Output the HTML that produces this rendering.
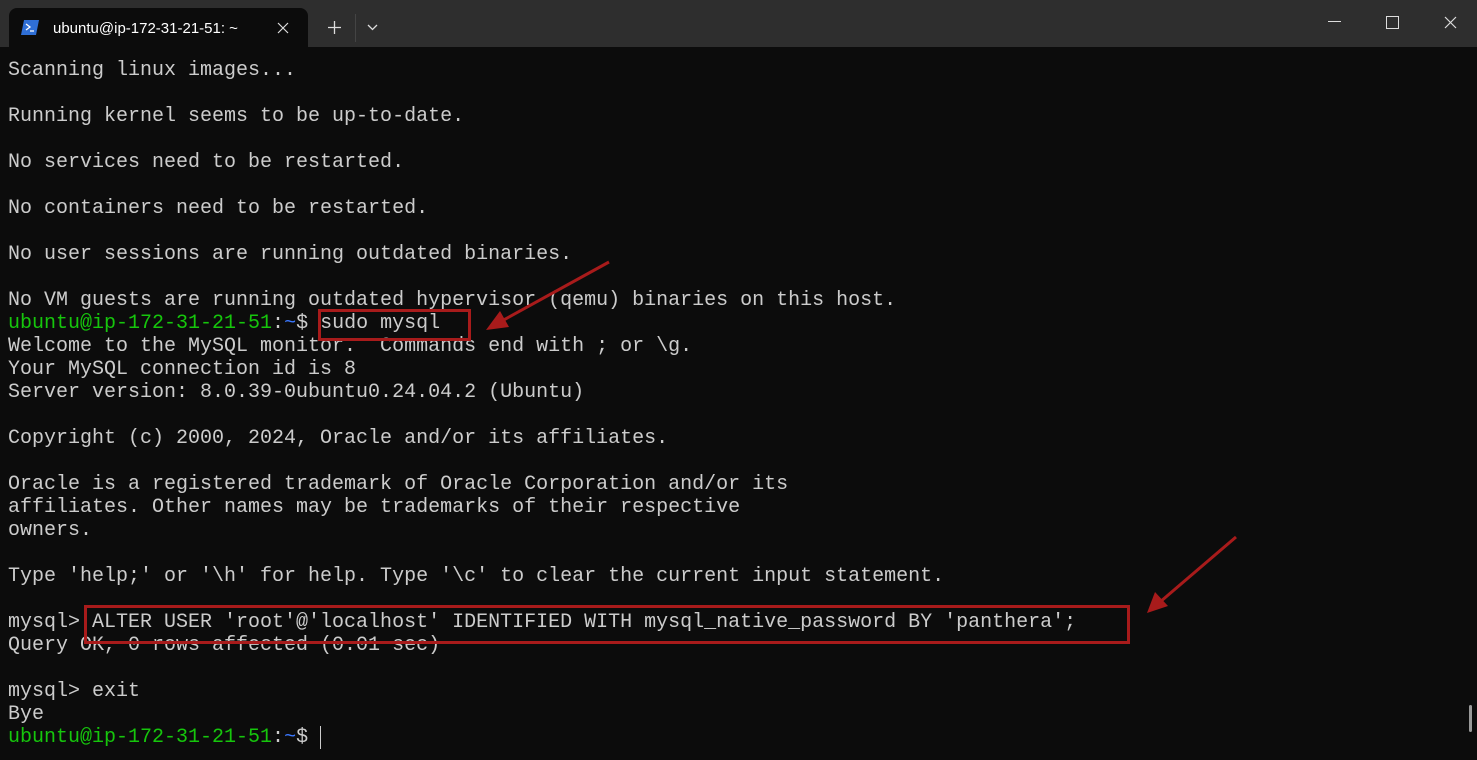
<!DOCTYPE html>
<html><head><style>
body{margin:0;width:1477px;height:760px;background:#0c0c0c;overflow:hidden;position:relative;font-family:"Liberation Sans",sans-serif}
.bar{position:absolute;left:0;top:0;width:1477px;height:47px;background:#2e2e2e}
.tab{position:absolute;left:9px;top:8px;width:299px;height:39px;background:#0c0c0c;border-radius:8px 8px 0 0}
.tab .t{position:absolute;left:44px;top:12px;color:#fff;font-size:15px}
pre{position:absolute;left:8px;top:59px;margin:0;font-family:"Liberation Mono",monospace;font-size:20px;line-height:23px;color:#cccccc}
.g{color:#16c60c}.b{color:#3b78ff}
.box{position:absolute;border:3px solid #a81b1b;box-sizing:border-box}
</style></head><body>
<div class="bar">
<div class="tab">
<svg style="position:absolute;left:12px;top:12px" width="18" height="15"><polygon points="3,0 18,0 15,15 0,15" fill="#2f6fd6"/><path d="M5 4l4 3-4 3M9 11h4" stroke="#fff" stroke-width="1.3" fill="none"/></svg>
<div class="t">ubuntu@ip-172-31-21-51: ~</div>
<svg style="position:absolute;left:268px;top:14px" width="12" height="12"><path d="M1 1L11 11M11 1L1 11" stroke="#ddd" stroke-width="1.2"/></svg>
</div>
<svg style="position:absolute;left:328px;top:21px" width="13" height="13"><path d="M6.5 0V13M0 6.5H13" stroke="#ddd" stroke-width="1.3"/></svg>
<div style="position:absolute;left:355px;top:14px;width:1px;height:28px;background:#444"></div>
<svg style="position:absolute;left:367px;top:24px" width="11" height="7"><path d="M1 1L5.5 5.5 10 1" stroke="#ddd" stroke-width="1.3" fill="none"/></svg>
<div style="position:absolute;left:1328px;top:21px;width:13px;height:1px;background:#ddd"></div>
<div style="position:absolute;left:1386px;top:16px;width:11px;height:11px;border:1px solid #ddd"></div>
<svg style="position:absolute;left:1444px;top:16px" width="13" height="13"><path d="M1 1L12 12M12 1L1 12" stroke="#ddd" stroke-width="1.2"/></svg>
</div>
<pre>Scanning linux images...

Running kernel seems to be up-to-date.

No services need to be restarted.

No containers need to be restarted.

No user sessions are running outdated binaries.

No VM guests are running outdated hypervisor (qemu) binaries on this host.
<span class="g">ubuntu@ip-172-31-21-51</span>:<span class="b">~</span>$ sudo mysql
Welcome to the MySQL monitor.  Commands end with ; or \g.
Your MySQL connection id is 8
Server version: 8.0.39-0ubuntu0.24.04.2 (Ubuntu)

Copyright (c) 2000, 2024, Oracle and/or its affiliates.

Oracle is a registered trademark of Oracle Corporation and/or its
affiliates. Other names may be trademarks of their respective
owners.

Type 'help;' or '\h' for help. Type '\c' to clear the current input statement.

mysql> ALTER USER 'root'@'localhost' IDENTIFIED WITH mysql_native_password BY 'panthera';
Query OK, 0 rows affected (0.01 sec)

mysql> exit
Bye
<span class="g">ubuntu@ip-172-31-21-51</span>:<span class="b">~</span>$ <span style="border-left:1px solid #ccc"> </span></pre>
<div class="box" style="left:318px;top:309px;width:153px;height:32px"></div>
<div class="box" style="left:84px;top:605px;width:1046px;height:39px"></div>
<svg style="position:absolute;left:0;top:0" width="1477" height="760">
<path d="M609 262L500 322" stroke="#a81b1b" stroke-width="3"/><polygon points="486,330 500,311 509,327" fill="#a81b1b"/>
<path d="M1236 537L1160 602" stroke="#a81b1b" stroke-width="3"/><polygon points="1147,613 1155,592 1168,606" fill="#a81b1b"/>
</svg>
<div style="position:absolute;left:1469px;top:705px;width:3px;height:27px;background:#999;border-radius:2px"></div>
</body></html>
